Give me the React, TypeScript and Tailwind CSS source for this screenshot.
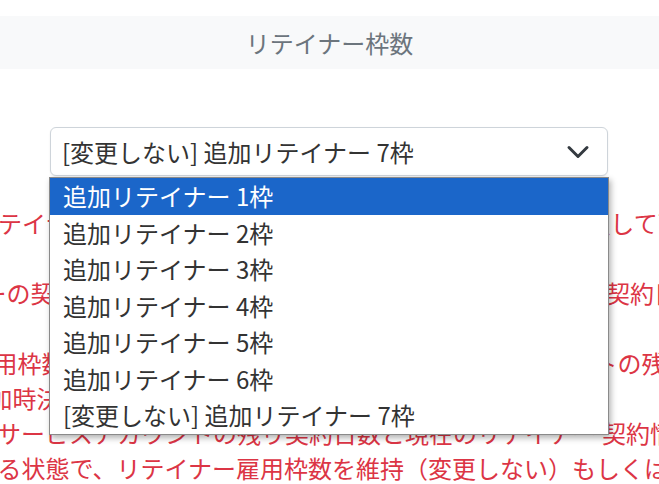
const options = [
  "追加リテイナー 1枠",
  "追加リテイナー 2枠",
  "追加リテイナー 3枠",
  "追加リテイナー 4枠",
  "追加リテイナー 5枠",
  "追加リテイナー 6枠",
  "[変更しない] 追加リテイナー 7枠",
];

export default function App() {
  return (
    <div
      className="relative w-full h-[484px] overflow-hidden bg-white"
      style={{ fontFamily: '"Noto Sans CJK JP", "Noto Sans", sans-serif' }}
    >
      {/* 見出し */}
      <div className="mt-[16px] h-[53px] bg-[#f8f9fa] flex items-center justify-center text-[24px] text-[#6c757d]">
        リテイナー枠数
      </div>

      {/* セレクト + 開いたドロップダウン */}
      <div className="relative mt-[58px] ml-[50px] w-[558px]">
        <div className="h-[49px] border border-[#ced4da] rounded-[6px] bg-white flex items-center justify-between pl-[11px] pr-[17px] text-[24px] text-[#333] shadow-[0_1px_2px_rgba(0,0,0,0.08)]">
          <span>[変更しない] 追加リテイナー 7枠</span>
          <svg width="24" height="18" viewBox="0 0 16 12" fill="none">
            <path d="m2 3 6 6 6-6" stroke="#343a40" strokeWidth="2" strokeLinecap="round" strokeLinejoin="round" />
          </svg>
        </div>

        <div className="absolute z-10 top-[50px] -left-px -right-px bg-white border border-[#8a8a8a] shadow-[2px_3px_6px_rgba(0,0,0,0.3)]">
          {options.map((o, i) => (
            <div
              key={o}
              className={
                i === 0
                  ? "h-[36.5px] flex items-center pl-[13px] text-[24px] bg-[#1b66c9] text-white"
                  : "h-[36.5px] flex items-center pl-[13px] text-[24px] text-[#333]"
              }
            >
              {o}
            </div>
          ))}
        </div>
      </div>

      {/* 注意書き（赤字） */}
      <div className="mt-[29px] text-[24px] leading-[35px] text-[#dc3545] whitespace-nowrap">
        <p className="-ml-[26px] mb-[35px]">リテイナー枠を1枠追加する場合には、下記より枠数を選択して下さい</p>
        <p className="-ml-[113px] mb-[35px]">リテイナーの契約期間中にリテイナー枠数を変更した場合、次回の契約日より適用</p>
        <p className="-ml-[150px]">リテイナー雇用枠数を変更・追加する場合には、各サービスアカウントの残り日数で計算</p>
        <p className="-ml-[203px]">リテイナー枠の追加時決済は、現在の契約期間の残り日数で日割り計算</p>
        <p className="-ml-[3px]">サービスアカウントの残り契約日数と現在のリテイナー 契約情報を確認し、</p>
        <p className="-ml-[50px]">できる状態で、リテイナー雇用枠数を維持（変更しない）もしくは追加してください。</p>
      </div>
    </div>
  );
}
